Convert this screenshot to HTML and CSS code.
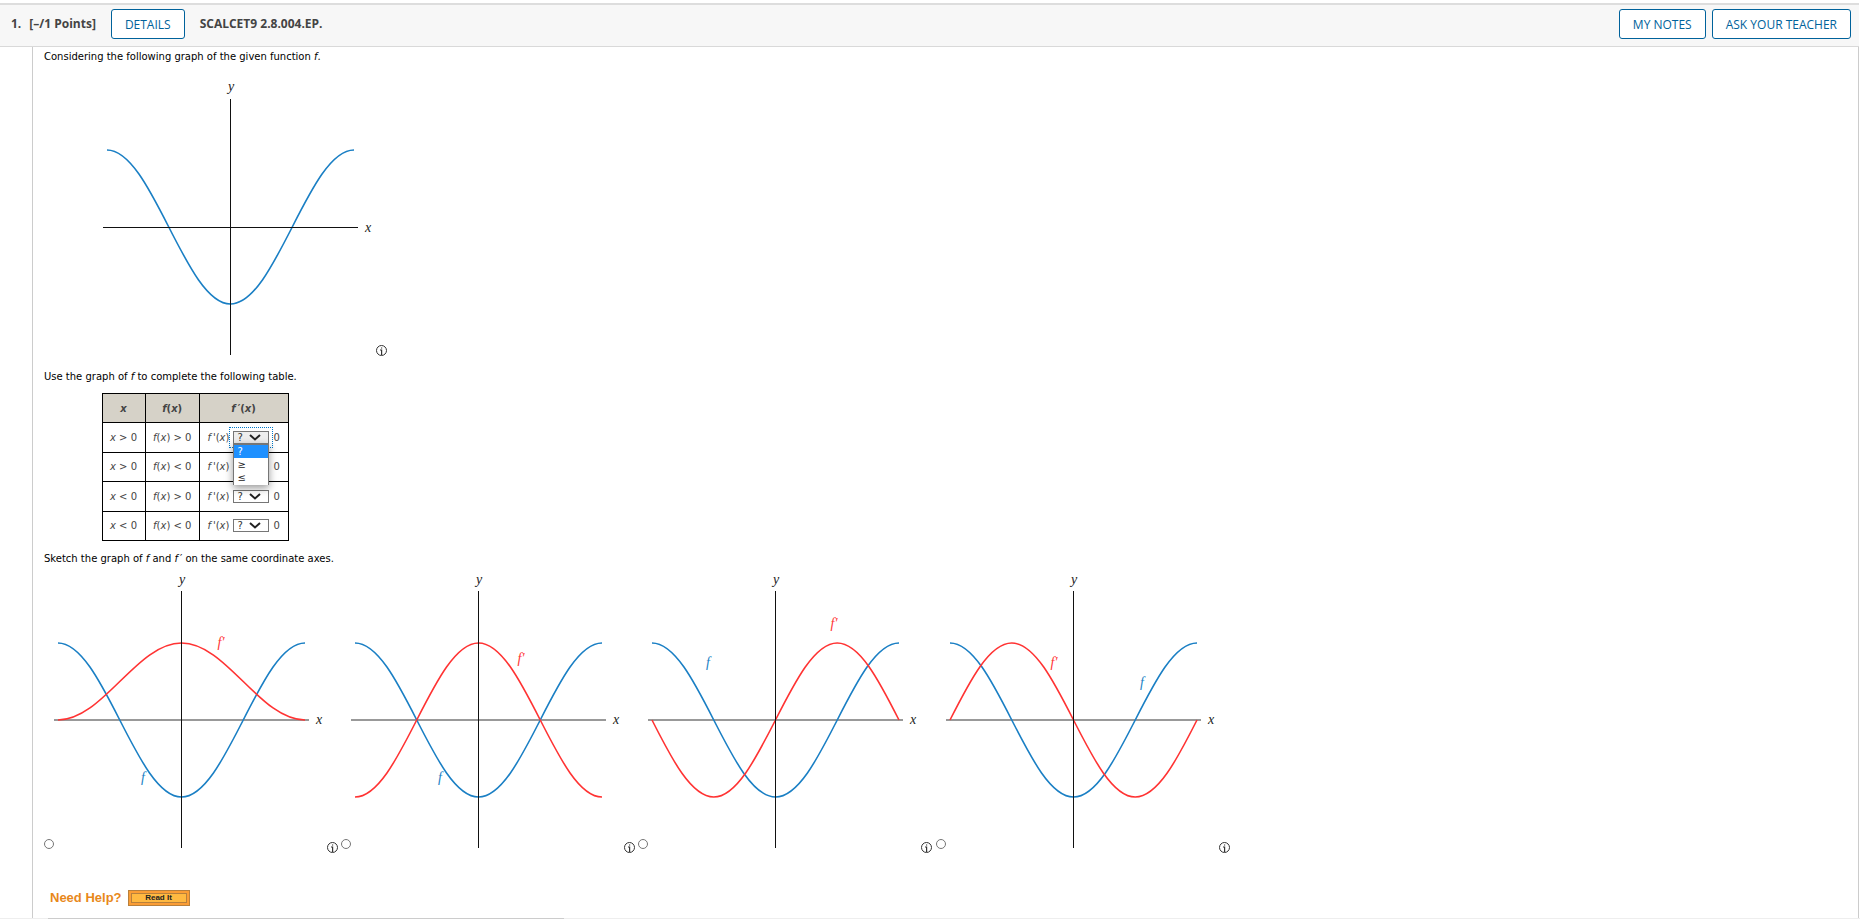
FILE: index.html
```html
<!DOCTYPE html>
<html lang="en">
<head>
    <meta charset="UTF-8">
    <meta name="viewport" content="width=device-width, initial-scale=1.0">
    <title>SCALCET9 2.8.004.EP.</title>
    <link rel="stylesheet" href="styles.css">
</head>
<body>
    <!-- shared shapes -->
    <svg class="defs" width="0" height="0" aria-hidden="true">
        <symbol id="info" viewBox="0 0 11 11">
            <circle cx="5.5" cy="5.5" r="5" fill="none" stroke="#333" />
            <path d="M5 2.4h1.2v1.2H5zM4 4.6h2.2V10H5V5.6H4z" fill="#333" />
        </symbol>
        <symbol id="chevron" viewBox="0 0 12 7">
            <path d="M1 1l5 4.4L11 1" fill="none" stroke="#222" stroke-width="2" />
        </symbol>
    </svg>

    <header class="question-header">
        <span class="number">1.</span>
        <span class="points">[–/1 Points]</span>
        <button class="header-button">DETAILS</button>
        <span class="question-name">SCALCET9 2.8.004.EP.</span>
        <div class="header-actions">
            <button class="header-button">MY NOTES</button>
            <button class="header-button">ASK YOUR TEACHER</button>
        </div>
    </header>

    <main class="question">
        <p>Considering the following graph of the given function <i>f</i>.</p>

        <div class="figure main-figure">
            <svg class="graph" viewBox="0 0 270 273" role="img" aria-label="Graph of f">
                <path class="curve-f" d="M4 67C49 67 82.5 221 127.5 221S206 67 251 67" />
                <path class="axis" d="M0 144.5h255M127.5 16v256" />
                <text class="axis-label" x="265" y="149">x</text>
                <text class="axis-label" x="128" y="8">y</text>
            </svg>
            <svg class="info"><use href="#info" /></svg>
        </div>

        <p>Use the graph of <i>f</i> to complete the following table.</p>

        <table class="sign-table">
            <thead>
                <tr><th><i>x</i></th><th><i>f</i>(<i>x</i>)</th><th><i>f</i>&thinsp;′(<i>x</i>)</th></tr>
            </thead>
            <tbody>
                <tr>
                    <td><i>x</i> &gt; 0</td>
                    <td><i>f</i>(<i>x</i>) &gt; 0</td>
                    <td>
                        <div class="answer">
                            <label for="sign1"><i>f</i>&thinsp;'(<i>x</i>)</label>
                            <span class="picker open">
                                <select id="sign1"><option>?</option><option>≥</option><option>≤</option></select>
                                <svg class="chevron"><use href="#chevron" /></svg>
                                <span class="menu">
                                    <span class="menu-item selected">?</span>
                                    <span class="menu-item">≥</span>
                                    <span class="menu-item">≤</span>
                                </span>
                            </span>
                            <span>0</span>
                        </div>
                    </td>
                </tr>
                <tr>
                    <td><i>x</i> &gt; 0</td>
                    <td><i>f</i>(<i>x</i>) &lt; 0</td>
                    <td>
                        <div class="answer">
                            <label for="sign2"><i>f</i>&thinsp;'(<i>x</i>)</label>
                            <span class="picker">
                                <select id="sign2"><option>?</option><option>≥</option><option>≤</option></select>
                                <svg class="chevron"><use href="#chevron" /></svg>
                            </span>
                            <span>0</span>
                        </div>
                    </td>
                </tr>
                <tr>
                    <td><i>x</i> &lt; 0</td>
                    <td><i>f</i>(<i>x</i>) &gt; 0</td>
                    <td>
                        <div class="answer">
                            <label for="sign3"><i>f</i>&thinsp;'(<i>x</i>)</label>
                            <span class="picker">
                                <select id="sign3"><option>?</option><option>≥</option><option>≤</option></select>
                                <svg class="chevron"><use href="#chevron" /></svg>
                            </span>
                            <span>0</span>
                        </div>
                    </td>
                </tr>
                <tr>
                    <td><i>x</i> &lt; 0</td>
                    <td><i>f</i>(<i>x</i>) &lt; 0</td>
                    <td>
                        <div class="answer">
                            <label for="sign4"><i>f</i>&thinsp;'(<i>x</i>)</label>
                            <span class="picker">
                                <select id="sign4"><option>?</option><option>≥</option><option>≤</option></select>
                                <svg class="chevron"><use href="#chevron" /></svg>
                            </span>
                            <span>0</span>
                        </div>
                    </td>
                </tr>
            </tbody>
        </table>

        <p>Sketch the graph of <i>f</i> and <i>f</i>&thinsp;′ on the same coordinate axes.</p>

        <div class="choices">
            <div class="figure choice">
                <input type="radio" name="sketch" id="sketch1">
                <label for="sketch1">
                    <svg class="graph" viewBox="0 0 270 273" role="img" aria-label="Graph A">
                        <path class="axis-light" d="M0 144h255" />
                        <path class="curve-f" d="M4 67C49 67 82.5 221 127.5 221S206 67 251 67" />
                        <path class="curve-df" d="M4 144C49 144 82.5 67 127.5 67S206 144 251 144" />
                        <path class="axis" d="M127.5 15v257" />
                        <text class="axis-label" x="265" y="148">x</text>
                        <text class="axis-label" x="128" y="8">y</text>
                        <text class="label-f" x="89" y="206">f</text>
                        <text class="label-df" x="167" y="71">f′</text>
                    </svg>
                </label>
                <svg class="info"><use href="#info" /></svg>
            </div>
            <div class="figure choice">
                <input type="radio" name="sketch" id="sketch2">
                <label for="sketch2">
                    <svg class="graph" viewBox="0 0 270 273" role="img" aria-label="Graph B">
                        <path class="axis-light" d="M0 144h255" />
                        <path class="curve-f" d="M4 67C49 67 82.5 221 127.5 221S206 67 251 67" />
                        <path class="curve-df" d="M4 221C49 221 82.5 67 127.5 67S206 221 251 221" />
                        <path class="axis" d="M127.5 15v257" />
                        <text class="axis-label" x="265" y="148">x</text>
                        <text class="axis-label" x="128" y="8">y</text>
                        <text class="label-f" x="89" y="206">f</text>
                        <text class="label-df" x="170" y="87">f′</text>
                    </svg>
                </label>
                <svg class="info"><use href="#info" /></svg>
            </div>
            <div class="figure choice">
                <input type="radio" name="sketch" id="sketch3">
                <label for="sketch3">
                    <svg class="graph" viewBox="0 0 270 273" role="img" aria-label="Graph C">
                        <path class="axis-light" d="M0 144h255" />
                        <path class="curve-f" d="M4 67C49 67 82.5 221 127.5 221S206 67 251 67" />
                        <path class="curve-df" d="M4 144C24 183.5 43.4 221 65.75 221C110.75 221 144.25 67 189.25 67C211.6 67 231 104.5 251 144" />
                        <path class="axis" d="M127.5 15v257" />
                        <text class="axis-label" x="265" y="148">x</text>
                        <text class="axis-label" x="128" y="8">y</text>
                        <text class="label-f" x="60" y="91">f</text>
                        <text class="label-df" x="186" y="52">f′</text>
                    </svg>
                </label>
                <svg class="info"><use href="#info" /></svg>
            </div>
            <div class="figure choice">
                <input type="radio" name="sketch" id="sketch4">
                <label for="sketch4">
                    <svg class="graph" viewBox="0 0 270 273" role="img" aria-label="Graph D">
                        <path class="axis-light" d="M0 144h255" />
                        <path class="curve-f" d="M4 67C49 67 82.5 221 127.5 221S206 67 251 67" />
                        <path class="curve-df" d="M4 144C24 104.5 43.4 67 65.75 67C110.75 67 144.25 221 189.25 221C211.6 221 231 183.5 251 144" />
                        <path class="axis" d="M127.5 15v257" />
                        <text class="axis-label" x="265" y="148">x</text>
                        <text class="axis-label" x="128" y="8">y</text>
                        <text class="label-f" x="196" y="111">f</text>
                        <text class="label-df" x="108" y="91">f′</text>
                    </svg>
                </label>
                <svg class="info"><use href="#info" /></svg>
            </div>
        </div>

        <div class="help">
            <span class="help-title">Need Help?</span>
            <button class="read-it">Read It</button>
        </div>
    </main>
    <div class="bottom-rule"><span></span></div>
</body>
</html>
```

FILE: styles.css
```css
body {
    margin: 0;
    padding-top: 3px;
    background-color: #fff;
    color: #000;
    font-family: "DejaVu Sans", Verdana, sans-serif;
    font-size: 10px;
    line-height: 14px;
}
.defs {
    display: block;
}

/* header */
.question-header {
    display: flex;
    align-items: center;
    margin-right: 1px;
    padding: 4px 8px 7px 11px;
    border-top: 2px solid #ddd;
    border-bottom: 1px solid #d9d9d9;
    background-color: #f7f7f7;
    color: #444;
    font-family: "Open Sans", sans-serif;
    font-size: 12px;
    font-weight: bold;
}
.points {
    margin: 0 15px 0 8px;
}
.question-name {
    margin-left: 15px;
}
.header-actions {
    display: flex;
    gap: 6px;
    margin-left: auto;
}
.header-button {
    height: 30px;
    padding: 0 13px;
    border: 1px solid #00629b;
    border-radius: 3px;
    background-color: #fff;
    color: #00629b;
    font-family: "Open Sans", sans-serif;
    font-size: 12px;
    cursor: pointer;
}

/* question body */
.question {
    margin: 0 1px 0 32px;
    padding: 3px 11px 12px;
    border-left: 1px solid #ccc;
    border-right: 1px solid #ccc;
}
.question p {
    margin: 0;
}
.figure {
    display: inline-flex;
    align-items: flex-end;
}
.main-figure {
    display: flex;
    margin: 19px 0 14px 59px;
}
.graph {
    display: block;
    width: 270px;
    height: 273px;
    overflow: visible;
}
.info {
    width: 11px;
    height: 11px;
    margin-left: 3px;
}
.graph path {
    fill: none;
}
.axis {
    stroke: #111;
    stroke-width: 1;
}
.axis-light {
    stroke: #999;
    stroke-width: 2;
}
.curve-f, .curve-df {
    stroke-width: 1.6;
}
.curve-f { stroke: #1a7fc4; }
.curve-df { stroke: #ff3333; }
.graph text {
    font-family: "Liberation Serif", serif;
    font-size: 14px;
    font-style: italic;
    text-anchor: middle;
}
.axis-label { fill: #222; }
.label-f { fill: #1a7fc4; }
.label-df { fill: #ff3333; }

/* table */
.sign-table {
    height: 148px;
    margin: 9px 0 11px 58px;
    border-collapse: collapse;
    color: #444;
    line-height: 13px;
}
.sign-table th, .sign-table td {
    height: 28px;
    padding: 0 8px 0 7px;
    border: 1px solid #000;
    text-align: center;
    white-space: nowrap;
}
.sign-table th {
    background-color: #d6d2c8;
}
.answer {
    display: flex;
    align-items: center;
    gap: 4px;
}
.picker {
    position: relative;
    display: flex;
}
.picker select {
    width: 36px;
    height: 13px;
    padding: 0 3px;
    border: 1px solid #767676;
    border-radius: 0;
    background-color: #fff;
    color: #333;
    font-family: inherit;
    font-size: 10px;
    line-height: 11px;
    appearance: none;
}
.picker.open select {
    background-color: #eee;
    outline: 1px dotted #0078c8;
    outline-offset: 3px;
}
.chevron {
    position: absolute;
    top: 3px;
    right: 8px;
    width: 12px;
    height: 7px;
    pointer-events: none;
}
.menu {
    position: absolute;
    top: 12px;
    left: 0;
    right: 0;
    z-index: 1;
    padding-bottom: 1px;
    border: 1px solid #767676;
    border-top-width: 2px;
    border-bottom: 0;
    background-color: #fff;
    color: #222;
    text-align: left;
    box-shadow: 0 3px 8px rgba(0, 0, 0, 0.4);
}
.menu-item {
    display: block;
    padding-left: 3px;
}
.menu-item.selected {
    background-color: #1e90ff;
    color: #fff;
}

/* answer graphs */
.choices {
    margin-top: 10px;
}
.choice input {
    width: 10px;
    height: 10px;
    margin: 0 0 4px;
}
.choice .graph {
    margin-bottom: 4px;
}

/* help */
.help {
    display: flex;
    align-items: center;
    gap: 6px;
    margin: 37px 0 0 6px;
    font-family: "Liberation Sans", Arial, sans-serif;
    font-weight: bold;
}
.help-title {
    color: #e8881a;
    font-size: 13px;
}
.read-it {
    width: 62px;
    height: 16px;
    padding: 0;
    border: 1px solid #b8803c;
    background-color: #ffb941;
    box-shadow: inset 0 0 0 2px #fb9d35, inset 0 0 0 3px #b8803c;
    color: #222;
    font-family: inherit;
    font-size: 8px;
    font-weight: bold;
    line-height: 14px;
}
.bottom-rule {
    height: 1px;
    padding-left: 48px;
    background-color: #eee;
}
.bottom-rule span {
    display: block;
    width: 516px;
    height: 1px;
    background-color: #ccc;
}
```
